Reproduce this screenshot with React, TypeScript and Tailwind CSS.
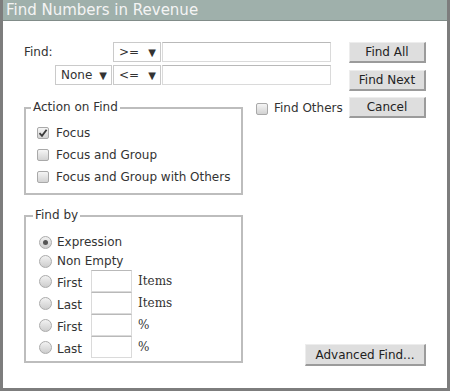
import React from 'react';

// Small gray check box, drawn with CSS + a checkmark svg
function CheckBox({ checked = false }: { checked?: boolean }) {
  return (
    <span className="flex h-[12px] w-[12px] shrink-0 items-center justify-center rounded-[2px] border border-[#a9a9a9] bg-linear-to-b from-[#f5f5f5] to-[#d2d2d2]">
      {checked && (
        <svg width="10" height="10" viewBox="0 0 10 10">
          <path d="M1.5 5.2 L4 7.8 L8.6 1.8" fill="none" stroke="#3a3a3a" strokeWidth="1.8" />
        </svg>
      )}
    </span>
  );
}

function Radio({ checked = false }: { checked?: boolean }) {
  return (
    <span className="flex h-[13px] w-[13px] shrink-0 items-center justify-center rounded-full border border-[#ababab] bg-linear-to-b from-[#f2f2f2] to-[#cdcdcd]">
      {checked && <span className="h-[5px] w-[5px] rounded-full bg-[#555]" />}
    </span>
  );
}

function Select({ label, width }: { label: string; width: string }) {
  return (
    <div
      className={`flex h-[20px] items-center justify-between border border-[#cacaca] bg-white pl-[5px] pr-[4px] text-[12px] text-[#333] ${width}`}
    >
      <span>{label}</span>
      <span className="text-[10px]">▼</span>
    </div>
  );
}

function Button({ label, width = 'w-[77px]', height = 'h-[21px]' }: { label: string; width?: string; height?: string }) {
  return (
    <button
      className={`flex items-center justify-center border-t border-l border-[#ededed] border-r-2 border-b-2 border-r-[#9b9b9b] border-b-[#9b9b9b] bg-[#dedede] text-[12px] text-[#222] ${width} ${height}`}
    >
      {label}
    </button>
  );
}

const TextInput = ({ className }: { className: string }) => (
  <div className={`border border-[#dadada] border-t-[#b9b9b9] bg-white ${className}`} />
);

export default function App() {
  const itemRows = [
    { name: 'First', unit: 'Items' },
    { name: 'Last', unit: 'Items' },
    { name: 'First', unit: '%' },
    { name: 'Last', unit: '%' },
  ];

  return (
    <div className="flex h-[391px] w-[450px] flex-col border-x-[3px] border-b-[3px] border-[#7d7d7d] bg-white font-['DejaVu_Sans',sans-serif] text-[#333]">
      {/* title bar */}
      <div className="h-[21px] shrink-0 border-b border-[#818c89] bg-[#9fb0ab] pl-[3px] text-[15px] leading-[20px] text-[#f4f4f4]">
        Find Numbers in Revenue
      </div>

      <div className="pl-[21px] pt-[21px]">
        <div className="flex">
          {/* left column */}
          <div className="flex w-[319px] flex-col">
            <div className="flex h-[20px] items-center">
              <span className="w-[89px] text-[12px]">Find:</span>
              <Select label=">=" width="w-[48px]" />
              <TextInput className="ml-[1px] h-[20px] w-[169px]" />
            </div>
            <div className="mt-[3px] flex h-[20px] items-center">
              <div className="ml-[31px]">
                <Select label="None" width="w-[57px]" />
              </div>
              <div className="ml-[1px]">
                <Select label="<=" width="w-[48px]" />
              </div>
              <TextInput className="ml-[1px] h-[20px] w-[169px]" />
            </div>

            <div className="mt-[16px] flex items-start">
              <fieldset className="w-[219px] border-2 border-[#bdbdbd] pb-[5px] pl-[11px] pt-[8px]">
                <legend className="-ml-[6px] px-[2px] text-[12px] leading-[13px]">Action on Find</legend>
                {[
                  { label: 'Focus', checked: true },
                  { label: 'Focus and Group', checked: false },
                  { label: 'Focus and Group with Others', checked: false },
                ].map((c) => (
                  <div key={c.label} className="flex h-[22px] items-center">
                    <CheckBox checked={c.checked} />
                    <span className="ml-[7px] text-[12px] whitespace-nowrap">{c.label}</span>
                  </div>
                ))}
              </fieldset>
              <div className="ml-[13px] mt-[1px] flex h-[13px] items-center whitespace-nowrap">
                <CheckBox />
                <span className="ml-[6px] text-[12px] leading-[13px]">Find Others</span>
              </div>
            </div>
          </div>

          {/* button column */}
          <div className="ml-[6px] flex flex-col">
            <Button label="Find All" />
            <div className="mt-[7px]">
              <Button label="Find Next" />
            </div>
            <div className="mt-[6px]">
              <Button label="Cancel" />
            </div>
          </div>
        </div>

        <div className="mt-[14px] flex items-start">
          <fieldset className="w-[219px] border-2 border-[#bdbdbd] pb-[3px] pl-[13px] pt-[10px]">
            <legend className="-ml-[6px] px-[2px] text-[12px] leading-[13px]">Find by</legend>
            <div className="flex h-[20px] items-center">
              <Radio checked />
              <span className="ml-[5px] text-[12px]">Expression</span>
            </div>
            <div className="flex h-[18px] items-center">
              <Radio />
              <span className="ml-[5px] text-[12px]">Non Empty</span>
            </div>
            {itemRows.map((r, i) => (
              <div key={i} className="flex h-[22px] items-center">
                <Radio />
                <span className="ml-[5px] mt-[3px] w-[34px] text-[12px]">{r.name}</span>
                <TextInput className="h-[22px] w-[41px]" />
                <span className="ml-[6px] font-['DejaVu_Serif',serif] text-[12px]">{r.unit}</span>
              </div>
            ))}
          </fieldset>
          <div className="ml-[62px] mt-[135px]">
            <Button label="Advanced Find..." width="w-[121px]" height="h-[22px]" />
          </div>
        </div>
      </div>
    </div>
  );
}
